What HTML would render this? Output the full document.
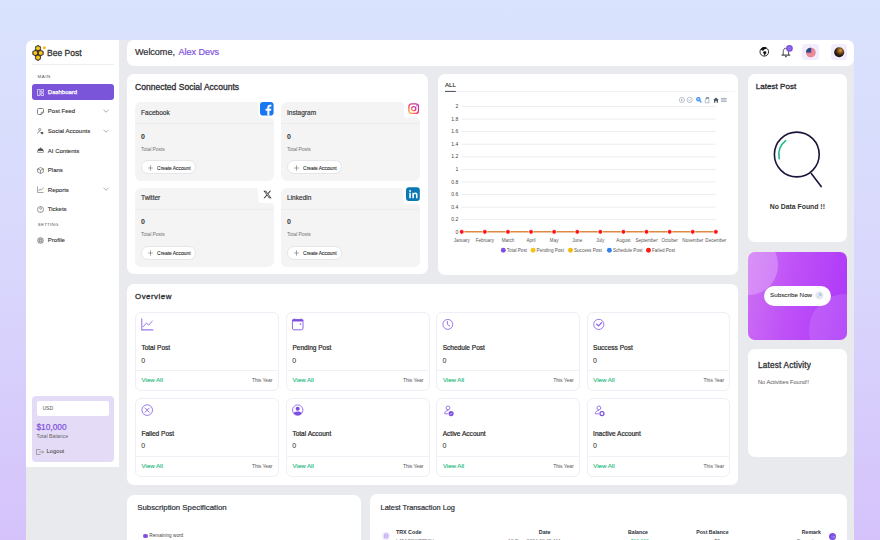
<!DOCTYPE html>
<html><head><meta charset="utf-8">
<style>
*{box-sizing:border-box;margin:0;padding:0}
html,body{width:880px;height:540px;overflow:hidden}
body{font-family:"Liberation Sans",sans-serif;color:#222;background:linear-gradient(180deg,#d9e3fd 0%,#d9d7fc 50%,#d5c2fb 100%);position:relative}
.a{position:absolute}
.w{background:#fff}
#app{left:26px;top:40px;width:828px;height:520px;background:#e9eaee;border-radius:7px 7px 0 0}
#side{left:26px;top:40px;width:93px;height:427px;background:#fff;border-radius:7px 0 0 0}
.t{position:absolute;white-space:nowrap;line-height:1}
</style></head>
<body>
<div id="app" class="a"></div>
<div id="side" class="a"></div>

<!-- SIDEBAR -->
<svg class="a" style="left:30px;top:43px" width="18" height="19" viewBox="30 43 18 19"><polygon points="38.00,45.25 40.64,46.77 40.64,49.82 38.00,51.35 35.36,49.82 35.36,46.77" fill="#2a241c" stroke="#2a241c" stroke-width="0.5"/><polygon points="35.30,49.90 37.94,51.43 37.94,54.48 35.30,56.00 32.66,54.48 32.66,51.43" fill="#2a241c" stroke="#2a241c" stroke-width="0.5"/><polygon points="40.70,49.90 43.34,51.43 43.34,54.48 40.70,56.00 38.06,54.48 38.06,51.43" fill="#2a241c" stroke="#2a241c" stroke-width="0.5"/><polygon points="38.00,54.55 40.64,56.08 40.64,59.12 38.00,60.65 35.36,59.12 35.36,56.08" fill="#2a241c" stroke="#2a241c" stroke-width="0.5"/><circle cx="38" cy="48.3" r="2.05" fill="#f8c51f"/><circle cx="35.3" cy="52.95" r="2.05" fill="#f8c51f"/><circle cx="40.7" cy="52.95" r="2.05" fill="#f8c51f"/><circle cx="38" cy="57.6" r="2.05" fill="#f8c51f"/><circle cx="44.3" cy="47.7" r="1.55" fill="#f9b71c"/></svg>
<div class="t" style="left:47px;top:48.8px;font-size:8.5px;color:#333;-webkit-text-stroke:0.3px #333">Bee Post</div>
<div class="a" style="left:32px;top:64px;width:82px;height:1px;background:#eceef2"></div>
<div class="t" style="left:37.5px;top:75.1px;font-size:4.4px;letter-spacing:0.55px;color:#555">MAIN</div>
<div class="a" style="left:32px;top:84px;width:82px;height:16px;background:#7b55d9;border-radius:3px"></div>
<svg class="a" style="left:37px;top:88.5px" width="7" height="7" viewBox="0 0 7 7" fill="none" stroke="#fff" stroke-width="0.7">
 <rect x="0.4" y="0.4" width="2.6" height="6.2" rx="0.4"/><rect x="4" y="0.4" width="2.6" height="2.6" rx="0.4"/><rect x="4" y="4" width="2.6" height="2.6" rx="0.4"/>
</svg>
<div class="t" style="left:47.8px;top:89px;font-size:6.0px;color:#fff;-webkit-text-stroke:0.25px #fff">Dashboard</div>
<svg class="a" style="left:37px;top:107.6px" width="7" height="7" viewBox="0 0 7 7" fill="none" stroke="#5e5e5e" stroke-width="0.75"><path d="M1.6,0.5h3.8a1.1,1.1 0 0 1 1.1,1.1v2.6l-2.3,2.3h-2.6a1.1,1.1 0 0 1 -1.1,-1.1v-3.8a1.1,1.1 0 0 1 1.1,-1.1z M6.5,4.2h-1.6a0.7,0.7 0 0 0 -0.7,0.7v1.6"/></svg>
<div class="t" style="left:47.8px;top:108.3px;font-size:6.0px;color:#333;-webkit-text-stroke:0.12px #333">Post Feed</div>
<svg class="a" style="left:102.5px;top:109.1px" width="6" height="4" viewBox="0 0 6 4" fill="none" stroke="#777" stroke-width="0.6"><path d="M0.5,0.8l2.5,2.4l2.5-2.4"/></svg>
<svg class="a" style="left:37px;top:127.6px" width="7" height="7" viewBox="0 0 7 7" fill="none" stroke="#5e5e5e" stroke-width="0.7"><circle cx="2.7" cy="1.6" r="1.1"/><path d="M0.6,5.6c0.2-1.3,1-2.1,2.1-2.1"/><circle cx="5.1" cy="5.1" r="1.25" fill="#5e5e5e" stroke="none"/><path d="M3.2,4.3l0.9,0.8"/></svg>
<div class="t" style="left:47.8px;top:128.3px;font-size:6.0px;color:#333;-webkit-text-stroke:0.12px #333">Social Accounts</div>
<svg class="a" style="left:102.5px;top:129.1px" width="6" height="4" viewBox="0 0 6 4" fill="none" stroke="#777" stroke-width="0.6"><path d="M0.5,0.8l2.5,2.4l2.5-2.4"/></svg>
<svg class="a" style="left:37px;top:147.3px" width="7" height="7" viewBox="0 0 7 7"><path d="M0.4,5.6v-1.2a3.1,3.1 0 0 1 6.2,0v1.2z" fill="#4e4e4e"/><rect x="0.9" y="3.9" width="5.2" height="1" fill="#fff"/><circle cx="3.5" cy="1.1" r="0.55" fill="#4e4e4e"/><path d="M3.5,1.3v0.9" stroke="#4e4e4e" stroke-width="0.5"/></svg>
<div class="t" style="left:47.8px;top:148.0px;font-size:6.0px;color:#333;-webkit-text-stroke:0.12px #333">AI Contents</div>
<svg class="a" style="left:37px;top:166.5px" width="7" height="7" viewBox="0 0 7 7" fill="none" stroke="#5e5e5e" stroke-width="0.65"><path d="M3.5,0.5l2.9,1.4v3.2l-2.9,1.4l-2.9,-1.4v-3.2z M0.6,1.9l2.9,1.4l2.9,-1.4 M3.5,3.3v3.2"/></svg>
<div class="t" style="left:47.8px;top:167.2px;font-size:6.0px;color:#333;-webkit-text-stroke:0.12px #333">Plans</div>
<svg class="a" style="left:37px;top:185.9px" width="7" height="7" viewBox="0 0 7 7" fill="none" stroke="#6a6a6a" stroke-width="0.6"><path d="M0.5,0.5v6h6 M1.5,5l1.5-2l1.3,1.2l2.2-2.7"/></svg>
<div class="t" style="left:47.8px;top:186.6px;font-size:6.0px;color:#333;-webkit-text-stroke:0.12px #333">Reports</div>
<svg class="a" style="left:102.5px;top:187.4px" width="6" height="4" viewBox="0 0 6 4" fill="none" stroke="#777" stroke-width="0.6"><path d="M0.5,0.8l2.5,2.4l2.5-2.4"/></svg>
<svg class="a" style="left:37px;top:205.6px" width="7" height="7" viewBox="0 0 7 7" fill="none" stroke="#5e5e5e" stroke-width="0.65"><circle cx="3.5" cy="3.5" r="3"/><path d="M2.6,2.7c0-0.6,0.4-0.95,0.9-0.95s0.9,0.35,0.9,0.85c0,0.7-0.9,0.8-0.9,1.5"/><circle cx="3.5" cy="5.25" r="0.35" fill="#7a7a7a" stroke="none"/></svg>
<div class="t" style="left:47.8px;top:206.3px;font-size:6.0px;color:#333;-webkit-text-stroke:0.12px #333">Tickets</div>
<svg class="a" style="left:37px;top:236.5px" width="7" height="7" viewBox="0 0 7 7" fill="none" stroke="#6a6a6a" stroke-width="0.6"><circle cx="3.5" cy="3.5" r="2.9" fill="#d4d4d4"/><circle cx="3.5" cy="3.5" r="1.2"/><path d="M1.6,1.6l1,1 M5.4,1.6l-1,1 M1.6,5.4l1-1 M5.4,5.4l-1-1"/></svg>
<div class="t" style="left:47.8px;top:237.2px;font-size:6.0px;color:#333;-webkit-text-stroke:0.12px #333">Profile</div>
<div class="t" style="left:37.8px;top:223.2px;font-size:4.3px;letter-spacing:0.3px;color:#555">SETTING</div>
<div class="a" style="left:32px;top:396px;width:82px;height:66px;background:#e4dcf6;border-radius:4px"></div>
<div class="a" style="left:37px;top:401px;width:72px;height:15px;background:#fff;border-radius:2px"></div>
<div class="t" style="left:42.4px;top:405.6px;font-size:5.1px;color:#555">USD</div>
<div class="t" style="left:36.5px;top:422.6px;font-size:8.3px;color:#7d4fe0;-webkit-text-stroke:0.2px #7d4fe0">$10,000</div>
<div class="t" style="left:36.5px;top:434.2px;font-size:5.28px;color:#666">Total Balance</div>
<svg class="a" style="left:36px;top:448.5px" width="8" height="6" viewBox="0 0 8 6" fill="none" stroke="#777" stroke-width="0.6"><path d="M4.5,0.5h-4v5h4 M3,3h4.5 M6,1.5l1.5,1.5l-1.5,1.5"/></svg>
<div class="t" style="left:46.5px;top:448.8px;font-size:5.8px;color:#333">Logout</div>
<!-- header -->
<div class="a w" style="left:127px;top:40px;width:727px;height:26.4px;border-radius:7px"></div>
<div class="t" style="left:135px;top:48.2px;font-size:9.1px;letter-spacing:-0.05px;color:#2e2e33;-webkit-text-stroke:0.2px #2e2e33">Welcome, <span style="margin-left:1.2px;color:#8052dc;-webkit-text-stroke:0.2px #8052dc">Alex Devs</span></div>

<svg class="a" style="left:758px;top:44px" width="38" height="15" viewBox="758 44 38 15">
<circle cx="764.3" cy="51.8" r="4.3" fill="none" stroke="#111" stroke-width="0.9"/>
<path d="M760.6,49.6c0.8-1.6,2.2-2.4,3.6-2.5c0.9,0,1.9,0.3,2.4,0.7l-0.5,1.1c-0.6,0.2-1.4,0-2,0.5c-0.5,0.5-0.2,1.1-0.9,1.3c-0.8,0.2-1.3-0.3-1.6-0.6z" fill="#111"/>
<path d="M763.2,51.8c0.6-0.6,1.8-0.7,2.6-0.4c0.6,0.3,0.7,0.9,0.5,1.5c-0.3,0.7-0.9,0.8-1,1.5c-0.1,0.6-0.4,1.2-0.9,1.2c-0.3-0.8-0.3-1.5-0.7-2c-0.4-0.5-0.8-1.2-0.5-1.8z" fill="#111"/>
<path d="M783.2,54.9v-3.3c0-1.9,1.1-3.4,2.7-3.4s2.7,1.5,2.7,3.4v3.3" fill="none" stroke="#222" stroke-width="0.8"/>
<path d="M781.9,55.1h8" stroke="#222" stroke-width="1" stroke-linecap="round"/>
<circle cx="785.9" cy="56.6" r="0.8" fill="#222"/>
<circle cx="789.5" cy="48.4" r="3.3" fill="#7b4fe2"/>
<circle cx="789.5" cy="48.4" r="1.3" fill="none" stroke="#b9a3f2" stroke-width="0.6"/>
</svg>
<div class="a" style="left:802.3px;top:44.3px;width:17px;height:16px;border-radius:3.5px;background:#f1edfc"></div>
<div class="a" style="left:831.2px;top:44.3px;width:16px;height:16px;border-radius:3.5px;background:#f1edfc"></div>
<svg class="a" style="left:805px;top:47px" width="12" height="12" viewBox="805 47 12 12">
<defs><clipPath id="fc"><circle cx="810.8" cy="52.5" r="4.8"/></clipPath></defs>
<g clip-path="url(#fc)"><rect x="805" y="47" width="12" height="12" fill="#e6798a"/>
<path d="M805,48.7h12M805,50.1h12M805,51.5h12M805,52.9h12M805,54.3h12M805,55.7h12M805,57.1h12" stroke="#f2a3ae" stroke-width="0.55"/>
<rect x="805" y="47" width="6.2" height="5.6" fill="#2b4a8c"/></g>
</svg>
<svg class="a" style="left:833px;top:46px" width="12" height="12" viewBox="833 46 12 12">
<defs><radialGradient id="av" cx="0.62" cy="0.32" r="0.75"><stop offset="0" stop-color="#e2a23e"/><stop offset="0.3" stop-color="#8a5a20"/><stop offset="0.65" stop-color="#2a1c10"/><stop offset="1" stop-color="#120d08"/></radialGradient></defs>
<circle cx="839.2" cy="52.3" r="5" fill="url(#av)"/>
</svg>
<!-- connected social card -->
<div class="a w" style="left:127px;top:74px;width:301px;height:200px;border-radius:7px"></div>
<div class="t" style="left:135px;top:82.9px;font-size:8.55px;color:#2e2e33;-webkit-text-stroke:0.3px #2e2e33">Connected Social Accounts</div>


<!-- SOCIAL CARDS -->
<svg class="a" style="left:135px;top:102.2px" width="139" height="79" viewBox="0 0 139 79"><path d="M6,0 H120.0 A3.5,3.5 0 0 1 123.5,3.5 V12 A4,4 0 0 0 127.5,16 H135.5 A3.5,3.5 0 0 1 139,19.5 V73 A6,6 0 0 1 133,79 H6 A6,6 0 0 1 0,73 V6 A6,6 0 0 1 6,0 Z" fill="#f4f4f5"/><path d="M0,21.4H139" stroke="#e8eaf1" stroke-width="0.8"/></svg>
<div class="t" style="left:141px;top:109.8px;font-size:6.55px;color:#333;-webkit-text-stroke:0.15px #333">Facebook</div>
<div class="t" style="left:141px;top:132.5px;font-size:7px;font-weight:bold;color:#333">0</div>
<div class="t" style="left:141px;top:146.6px;font-size:5.1px;letter-spacing:-0.1px;color:#777">Total Posts</div>
<div class="a" style="left:141.1px;top:160.1px;width:55.3px;height:14px;background:#fff;border:0.6px solid #e6e6e8;border-radius:7px"></div>
<svg class="a" style="left:147.8px;top:164.5px" width="5" height="6" viewBox="0 0 5 6" stroke="#555" stroke-width="0.5"><path d="M2.5,0.3V5.7M0.1,3H4.9"/></svg>
<div class="t" style="left:157.1px;top:166.9px;font-size:4.9px;color:#2a2a2a;-webkit-text-stroke:0.1px #2a2a2a">Create Account</div>
<svg class="a" style="left:281px;top:102.2px" width="139" height="79" viewBox="0 0 139 79"><path d="M6,0 H119.5 A3.5,3.5 0 0 1 123,3.5 V12 A4,4 0 0 0 127,16 H135.5 A3.5,3.5 0 0 1 139,19.5 V73 A6,6 0 0 1 133,79 H6 A6,6 0 0 1 0,73 V6 A6,6 0 0 1 6,0 Z" fill="#f4f4f5"/><path d="M0,21.4H139" stroke="#e8eaf1" stroke-width="0.8"/></svg>
<div class="t" style="left:287px;top:109.8px;font-size:6.55px;color:#333;-webkit-text-stroke:0.15px #333">Instagram</div>
<div class="t" style="left:287px;top:132.5px;font-size:7px;font-weight:bold;color:#333">0</div>
<div class="t" style="left:287px;top:146.6px;font-size:5.1px;letter-spacing:-0.1px;color:#777">Total Posts</div>
<div class="a" style="left:287.1px;top:160.1px;width:55.3px;height:14px;background:#fff;border:0.6px solid #e6e6e8;border-radius:7px"></div>
<svg class="a" style="left:293.8px;top:164.5px" width="5" height="6" viewBox="0 0 5 6" stroke="#555" stroke-width="0.5"><path d="M2.5,0.3V5.7M0.1,3H4.9"/></svg>
<div class="t" style="left:303.1px;top:166.9px;font-size:4.9px;color:#2a2a2a;-webkit-text-stroke:0.1px #2a2a2a">Create Account</div>
<svg class="a" style="left:135px;top:187.6px" width="139" height="79" viewBox="0 0 139 79"><path d="M6,0 H119.8 A3.5,3.5 0 0 1 123.3,3.5 V11 A4,4 0 0 0 127.3,15 H135.5 A3.5,3.5 0 0 1 139,18.5 V73 A6,6 0 0 1 133,79 H6 A6,6 0 0 1 0,73 V6 A6,6 0 0 1 6,0 Z" fill="#f4f4f5"/><path d="M0,21.4H139" stroke="#e8eaf1" stroke-width="0.8"/></svg>
<div class="t" style="left:141px;top:195.2px;font-size:6.55px;color:#333;-webkit-text-stroke:0.15px #333">Twitter</div>
<div class="t" style="left:141px;top:217.9px;font-size:7px;font-weight:bold;color:#333">0</div>
<div class="t" style="left:141px;top:232.0px;font-size:5.1px;letter-spacing:-0.1px;color:#777">Total Posts</div>
<div class="a" style="left:141.1px;top:245.5px;width:55.3px;height:14px;background:#fff;border:0.6px solid #e6e6e8;border-radius:7px"></div>
<svg class="a" style="left:147.8px;top:249.9px" width="5" height="6" viewBox="0 0 5 6" stroke="#555" stroke-width="0.5"><path d="M2.5,0.3V5.7M0.1,3H4.9"/></svg>
<div class="t" style="left:157.1px;top:252.3px;font-size:4.9px;color:#2a2a2a;-webkit-text-stroke:0.1px #2a2a2a">Create Account</div>
<svg class="a" style="left:281px;top:187.6px" width="139" height="79" viewBox="0 0 139 79"><path d="M6,0 H118.8 A3.5,3.5 0 0 1 122.3,3.5 V12 A4,4 0 0 0 126.3,16 H135.5 A3.5,3.5 0 0 1 139,19.5 V73 A6,6 0 0 1 133,79 H6 A6,6 0 0 1 0,73 V6 A6,6 0 0 1 6,0 Z" fill="#f4f4f5"/><path d="M0,21.4H139" stroke="#e8eaf1" stroke-width="0.8"/></svg>
<div class="t" style="left:287px;top:195.2px;font-size:6.55px;color:#333;-webkit-text-stroke:0.15px #333">Linkedin</div>
<div class="t" style="left:287px;top:217.9px;font-size:7px;font-weight:bold;color:#333">0</div>
<div class="t" style="left:287px;top:232.0px;font-size:5.1px;letter-spacing:-0.1px;color:#777">Total Posts</div>
<div class="a" style="left:287.1px;top:245.5px;width:55.3px;height:14px;background:#fff;border:0.6px solid #e6e6e8;border-radius:7px"></div>
<svg class="a" style="left:293.8px;top:249.9px" width="5" height="6" viewBox="0 0 5 6" stroke="#555" stroke-width="0.5"><path d="M2.5,0.3V5.7M0.1,3H4.9"/></svg>
<div class="t" style="left:303.1px;top:252.3px;font-size:4.9px;color:#2a2a2a;-webkit-text-stroke:0.1px #2a2a2a">Create Account</div>
<svg class="a" style="left:260.4px;top:102.2px" width="13.6" height="13.6" viewBox="0 0 14 14"><rect width="14" height="14" rx="3.2" fill="#1877f2"/><path d="M9.7,14V8.9h1.7l0.3-2H9.7V5.7c0-0.6,0.3-1.1,1.1-1.1h1V2.9c-0.4-0.1-1-0.1-1.6-0.1c-1.7,0-2.7,1-2.7,2.8v1.3H5.7v2h1.8V14z" fill="#fff"/></svg>
<svg class="a" style="left:407.6px;top:102.9px" width="11.4" height="11.4" viewBox="0 0 12 12"><defs><linearGradient id="ig" x1="0" y1="1" x2="1" y2="0"><stop offset="0" stop-color="#fdc94a"/><stop offset="0.45" stop-color="#f4346d"/><stop offset="1" stop-color="#b739c6"/></linearGradient></defs><rect x="0.9" y="0.9" width="10.2" height="10.2" rx="3" fill="none" stroke="url(#ig)" stroke-width="1.5"/><circle cx="6" cy="6" r="2.2" fill="none" stroke="url(#ig)" stroke-width="1.4"/><circle cx="9" cy="3" r="0.6" fill="#d0369b"/></svg>
<svg class="a" style="left:262.8px;top:189.8px" width="9" height="9" viewBox="0 0 24 24"><path d="M18.2,2.2h3.4l-7.4,8.5L23,21.8h-6.8l-5.3-7-6.1,7H1.4l7.9-9L1,2.2h7l4.8,6.4zM17,19.8h1.9L7,4.2H5z" fill="#333"/></svg>
<svg class="a" style="left:406.1px;top:187.2px" width="13.8" height="14.2" viewBox="0 0 14 14"><rect width="14" height="14" rx="3" fill="#0a78b5"/><rect x="3.3" y="5.6" width="1.6" height="5.6" fill="#fff"/><circle cx="4.1" cy="3.9" r="0.95" fill="#fff"/><path d="M6.4,5.6h1.5v0.8c0.3-0.5,0.9-0.9,1.8-0.9c1.5,0,2,0.9,2,2.4v3.3h-1.6V8.2c0-0.7-0.2-1.3-1-1.3c-0.8,0-1.1,0.6-1.1,1.4v2.9H6.4z" fill="#fff"/></svg>
<!-- chart card -->
<div class="a w" style="left:438px;top:74.2px;width:300.3px;height:200.6px;border-radius:7px"></div>


<!-- CHART -->
<svg class="a" style="left:438px;top:74px" width="300" height="201" viewBox="438 74 300 201" font-family="Liberation Sans, sans-serif">
<text x="445" y="87" font-size="6.1" fill="#333" stroke="#333" stroke-width="0.15">ALL</text>
<rect x="456" y="91" width="279" height="0.8" fill="#eef0f5"/><rect x="445" y="90.9" width="10.8" height="1.1" fill="#555b6b"/>
<rect x="461.5" y="106.00" width="254.3" height="0.9" fill="#ebebee"/>
<text x="458.2" y="108.00" font-size="5.0" fill="#444" text-anchor="end">2</text>
<rect x="461.5" y="118.58" width="254.3" height="0.9" fill="#ebebee"/>
<text x="458.2" y="120.58" font-size="5.0" fill="#444" text-anchor="end">1.8</text>
<rect x="461.5" y="131.17" width="254.3" height="0.9" fill="#ebebee"/>
<text x="458.2" y="133.17" font-size="5.0" fill="#444" text-anchor="end">1.6</text>
<rect x="461.5" y="143.76" width="254.3" height="0.9" fill="#ebebee"/>
<text x="458.2" y="145.75" font-size="5.0" fill="#444" text-anchor="end">1.4</text>
<rect x="461.5" y="156.34" width="254.3" height="0.9" fill="#ebebee"/>
<text x="458.2" y="158.34" font-size="5.0" fill="#444" text-anchor="end">1.2</text>
<rect x="461.5" y="168.93" width="254.3" height="0.9" fill="#ebebee"/>
<text x="458.2" y="170.93" font-size="5.0" fill="#444" text-anchor="end">1</text>
<rect x="461.5" y="181.51" width="254.3" height="0.9" fill="#ebebee"/>
<text x="458.2" y="183.51" font-size="5.0" fill="#444" text-anchor="end">0.8</text>
<rect x="461.5" y="194.10" width="254.3" height="0.9" fill="#ebebee"/>
<text x="458.2" y="196.09" font-size="5.0" fill="#444" text-anchor="end">0.6</text>
<rect x="461.5" y="206.68" width="254.3" height="0.9" fill="#ebebee"/>
<text x="458.2" y="208.68" font-size="5.0" fill="#444" text-anchor="end">0.4</text>
<rect x="461.5" y="219.26" width="254.3" height="0.9" fill="#ebebee"/>
<text x="458.2" y="221.26" font-size="5.0" fill="#444" text-anchor="end">0.2</text>
<text x="458.2" y="233.85" font-size="5.0" fill="#444" text-anchor="end">0</text>
<path d="M461.7,231.85H715.8" stroke="#de8a3e" stroke-width="1.5"/>
<circle cx="461.75" cy="231.85" r="2.35" fill="#ff0f0f" stroke="#fff" stroke-width="0.8"/>
<text x="461.75" y="241.5" font-size="4.55" fill="#555" text-anchor="middle">January</text>
<circle cx="484.85" cy="231.85" r="2.35" fill="#ff0f0f" stroke="#fff" stroke-width="0.8"/>
<text x="484.85" y="241.5" font-size="4.55" fill="#555" text-anchor="middle">February</text>
<circle cx="507.95" cy="231.85" r="2.35" fill="#ff0f0f" stroke="#fff" stroke-width="0.8"/>
<text x="507.95" y="241.5" font-size="4.55" fill="#555" text-anchor="middle">March</text>
<circle cx="531.05" cy="231.85" r="2.35" fill="#ff0f0f" stroke="#fff" stroke-width="0.8"/>
<text x="531.05" y="241.5" font-size="4.55" fill="#555" text-anchor="middle">April</text>
<circle cx="554.15" cy="231.85" r="2.35" fill="#ff0f0f" stroke="#fff" stroke-width="0.8"/>
<text x="554.15" y="241.5" font-size="4.55" fill="#555" text-anchor="middle">May</text>
<circle cx="577.25" cy="231.85" r="2.35" fill="#ff0f0f" stroke="#fff" stroke-width="0.8"/>
<text x="577.25" y="241.5" font-size="4.55" fill="#555" text-anchor="middle">June</text>
<circle cx="600.35" cy="231.85" r="2.35" fill="#ff0f0f" stroke="#fff" stroke-width="0.8"/>
<text x="600.35" y="241.5" font-size="4.55" fill="#555" text-anchor="middle">July</text>
<circle cx="623.45" cy="231.85" r="2.35" fill="#ff0f0f" stroke="#fff" stroke-width="0.8"/>
<text x="623.45" y="241.5" font-size="4.55" fill="#555" text-anchor="middle">August</text>
<circle cx="646.55" cy="231.85" r="2.35" fill="#ff0f0f" stroke="#fff" stroke-width="0.8"/>
<text x="646.55" y="241.5" font-size="4.55" fill="#555" text-anchor="middle">September</text>
<circle cx="669.65" cy="231.85" r="2.35" fill="#ff0f0f" stroke="#fff" stroke-width="0.8"/>
<text x="669.65" y="241.5" font-size="4.55" fill="#555" text-anchor="middle">October</text>
<circle cx="692.75" cy="231.85" r="2.35" fill="#ff0f0f" stroke="#fff" stroke-width="0.8"/>
<text x="692.75" y="241.5" font-size="4.55" fill="#555" text-anchor="middle">November</text>
<circle cx="715.85" cy="231.85" r="2.35" fill="#ff0f0f" stroke="#fff" stroke-width="0.8"/>
<text x="715.85" y="241.5" font-size="4.55" fill="#555" text-anchor="middle">December</text>
<circle cx="503.3" cy="250.2" r="2.45" fill="#7d4fe0"/><text x="506.8" y="251.8" font-size="4.6" fill="#555">Total Post</text>
<circle cx="533.1" cy="250.2" r="2.45" fill="#f5c518"/><text x="536.6" y="251.8" font-size="4.6" fill="#555">Pending Post</text>
<circle cx="570.5" cy="250.2" r="2.45" fill="#f2b90f"/><text x="574.0" y="251.8" font-size="4.6" fill="#555">Success Post</text>
<circle cx="609.4" cy="250.2" r="2.45" fill="#2f80ed"/><text x="612.9" y="251.8" font-size="4.6" fill="#555">Schedule Post</text>
<circle cx="648.5" cy="250.2" r="2.45" fill="#ff1a1a"/><text x="652.0" y="251.8" font-size="4.6" fill="#555">Failed Post</text>
<g fill="none" stroke="#8a93a3" stroke-width="0.55">
<circle cx="681.9" cy="99.9" r="2.6"/><path d="M681.3,98.6l1.6,1.3l-1.6,1.3z" fill="#8a93a3" stroke="none"/>
<circle cx="689.6" cy="99.9" r="2.6"/><path d="M688.5,99.4l1.1,1.3l1.1-1.3" />
</g>
<circle cx="698.4" cy="99.3" r="1.75" fill="#9cc4f7" stroke="#3d8ef0" stroke-width="1.1"/><path d="M699.7,100.7l1.7,1.8" stroke="#3d8ef0" stroke-width="1.1"/>
<path d="M705.3,102.8v-2.5c0-0.5,0.4-0.6,0.7-0.4v-1.7c0-0.9,2.9-0.9,2.9,0v4.6z" fill="#fff" stroke="#7f8a9c" stroke-width="0.55"/><rect x="705.9" y="97.2" width="2.9" height="1.6" fill="#7f8a9c"/>
<path d="M713.2,100.1l2.8-2.7l2.8,2.7h-0.8v2.7h-1.3v-1.7h-1.4v1.7h-1.3v-2.7z" fill="#4f5b6e"/>
<path d="M720.9,98.4h5.8M720.9,99.9h5.8M720.9,101.4h5.8" stroke="#9aa4b4" stroke-width="0.9"/>
</svg>
<!-- latest post -->
<div class="a w" style="left:748px;top:74px;width:99px;height:168px;border-radius:7px"></div>
<div class="t" style="left:755.8px;top:83.3px;font-size:8.1px;color:#2e2e33;-webkit-text-stroke:0.3px #2e2e33">Latest Post</div>

<svg class="a" style="left:768px;top:126px" width="60" height="66" viewBox="768 126 60 66">
<circle cx="796.8" cy="154.5" r="22.4" fill="none" stroke="#19163a" stroke-width="1.6"/>
<path d="M811.3,173.6L821.2,186.6" stroke="#19163a" stroke-width="1.6" stroke-linecap="round"/>
<path d="M785.6,140.6A18.6,18.6 0 0 0 779.2,158.6" fill="none" stroke="#22b98a" stroke-width="1.6" stroke-linecap="round"/>
</svg>
<div class="t" style="left:769.7px;top:203.5px;font-size:6.87px;font-weight:bold;color:#333">No Data Found !!</div>
<!-- subscribe -->
<div class="a" style="left:748px;top:251.5px;width:99.4px;height:88.3px;border-radius:7px;overflow:hidden;background:linear-gradient(100deg,#cd70f4 0%,#be50f7 45%,#ad37f9 100%)">
 <div class="a" style="left:-29.6px;top:-16.1px;width:59.2px;height:59.2px;border-radius:50%;background:rgba(255,255,255,0.24)"></div>
 <div class="a" style="left:61px;top:42.5px;width:72px;height:72px;border-radius:50%;background:rgba(255,255,255,0.12)"></div>
</div>
<div class="a" style="left:763.5px;top:285.5px;width:67.7px;height:20.2px;border-radius:10.1px;background:#fff"></div>
<div class="t" style="left:770.1px;top:292.3px;font-size:6.26px;color:#2a2a2a;-webkit-text-stroke:0.08px #2a2a2a">Subscribe Now</div>
<svg class="a" style="left:815.3px;top:291.1px" width="8.8" height="8.8" viewBox="0 0 9 9"><circle cx="4.5" cy="4.5" r="4.3" fill="#e8e9ef"/><path d="M2.9,6.1L6.1,2.9M3.7,2.9H6.1V5.3" stroke="#6aaaf0" stroke-width="0.6" fill="none"/></svg>

<!-- latest activity -->
<div class="a w" style="left:748px;top:349px;width:99px;height:108px;border-radius:7px"></div>

<div class="t" style="left:758px;top:362.2px;font-size:8.2px;letter-spacing:0.2px;color:#2e2e33;-webkit-text-stroke:0.3px #2e2e33">Latest Activity</div>
<div class="t" style="left:758px;top:379.6px;font-size:5.6px;color:#555">No Activities Found!!</div>
<!-- overview -->
<div class="a w" style="left:127px;top:284px;width:611px;height:201px;border-radius:7px"></div>
<div class="t" style="left:135px;top:292.8px;font-size:7.9px;letter-spacing:0.5px;color:#2e2e33;-webkit-text-stroke:0.3px #2e2e33">Overview</div>


<!-- OVERVIEW CARDS -->
<div class="a" style="left:135px;top:312.2px;width:143.6px;height:78.8px;border:0.8px solid #efeef6;border-radius:6px"></div>
<div class="a" style="left:135px;top:370.1px;width:143.6px;height:0.8px;background:#f1f0f6"></div>
<svg class="a" style="left:135px;top:312.2px" width="24" height="24" viewBox="135 312.2 24 24"><path d="M141.8,319.1V330.1H152.9" fill="none" stroke="#9a78e8" stroke-width="1.1" stroke-linecap="round"/><path d="M143.1,327.0L146.4,323.3L148.7,325.3L152.4,321.2" fill="none" stroke="#9a78e8" stroke-width="1" stroke-linecap="round"/></svg>
<div class="t" style="left:141.4px;top:345.3px;font-size:6.55px;color:#262626;-webkit-text-stroke:0.2px #262626">Total Post</div>
<div class="t" style="left:141.3px;top:356.5px;font-size:7px;color:#333;-webkit-text-stroke:0.05px #333">0</div>
<div class="t" style="left:141.6px;top:377.1px;font-size:6.1px;color:#2ebd85;-webkit-text-stroke:0.15px #2ebd85">View All</div>
<div class="t" style="left:251.9px;top:378.1px;font-size:5.05px;letter-spacing:-0.06px;color:#555">This Year</div>
<div class="a" style="left:286px;top:312.2px;width:143.6px;height:78.8px;border:0.8px solid #efeef6;border-radius:6px"></div>
<div class="a" style="left:286px;top:370.1px;width:143.6px;height:0.8px;background:#f1f0f6"></div>
<svg class="a" style="left:286px;top:312.2px" width="24" height="24" viewBox="286 312.2 24 24"><rect x="292.4" y="320" width="10.6" height="10" rx="1.6" fill="none" stroke="#8e65e4" stroke-width="1"/><rect x="292" y="319.4" width="11.4" height="2.4" rx="1" fill="#7d4fe0"/><circle cx="300.5" cy="324.2" r="0.8" fill="#7d4fe0"/><path d="M294.6,319.4v-0.8M300.8,319.4v-0.8" stroke="#7d4fe0" stroke-width="0.9"/></svg>
<div class="t" style="left:292.4px;top:345.3px;font-size:6.55px;color:#262626;-webkit-text-stroke:0.2px #262626">Pending Post</div>
<div class="t" style="left:292.3px;top:356.5px;font-size:7px;color:#333;-webkit-text-stroke:0.05px #333">0</div>
<div class="t" style="left:292.6px;top:377.1px;font-size:6.1px;color:#2ebd85;-webkit-text-stroke:0.15px #2ebd85">View All</div>
<div class="t" style="left:402.9px;top:378.1px;font-size:5.05px;letter-spacing:-0.06px;color:#555">This Year</div>
<div class="a" style="left:436.3px;top:312.2px;width:143.6px;height:78.8px;border:0.8px solid #efeef6;border-radius:6px"></div>
<div class="a" style="left:436.3px;top:370.1px;width:143.6px;height:0.8px;background:#f1f0f6"></div>
<svg class="a" style="left:436.3px;top:312.2px" width="24" height="24" viewBox="436.3 312.2 24 24"><circle cx="448.1" cy="324.59999999999997" r="4.95" fill="none" stroke="#9a78e8" stroke-width="1"/><path d="M447.7,321.5V324.7L450.2,326.3" fill="none" stroke="#9a78e8" stroke-width="1" stroke-linecap="round"/></svg>
<div class="t" style="left:442.7px;top:345.3px;font-size:6.55px;color:#262626;-webkit-text-stroke:0.2px #262626">Schedule Post</div>
<div class="t" style="left:442.6px;top:356.5px;font-size:7px;color:#333;-webkit-text-stroke:0.05px #333">0</div>
<div class="t" style="left:442.9px;top:377.1px;font-size:6.1px;color:#2ebd85;-webkit-text-stroke:0.15px #2ebd85">View All</div>
<div class="t" style="left:553.2px;top:378.1px;font-size:5.05px;letter-spacing:-0.06px;color:#555">This Year</div>
<div class="a" style="left:586.7px;top:312.2px;width:143.6px;height:78.8px;border:0.8px solid #efeef6;border-radius:6px"></div>
<div class="a" style="left:586.7px;top:370.1px;width:143.6px;height:0.8px;background:#f1f0f6"></div>
<svg class="a" style="left:586.7px;top:312.2px" width="24" height="24" viewBox="586.7 312.2 24 24"><circle cx="598.5" cy="324.59999999999997" r="5.1" fill="none" stroke="#9a78e8" stroke-width="1"/><path d="M596.3000000000001,324.4L598.3000000000001,326.0L601.4000000000001,322.7" fill="none" stroke="#8a5fe6" stroke-width="1.1" stroke-linecap="round" stroke-linejoin="round"/></svg>
<div class="t" style="left:593.1px;top:345.3px;font-size:6.55px;color:#262626;-webkit-text-stroke:0.2px #262626">Success Post</div>
<div class="t" style="left:593.0px;top:356.5px;font-size:7px;color:#333;-webkit-text-stroke:0.05px #333">0</div>
<div class="t" style="left:593.3px;top:377.1px;font-size:6.1px;color:#2ebd85;-webkit-text-stroke:0.15px #2ebd85">View All</div>
<div class="t" style="left:703.6px;top:378.1px;font-size:5.05px;letter-spacing:-0.06px;color:#555">This Year</div>
<div class="a" style="left:135px;top:397.9px;width:143.6px;height:78.8px;border:0.8px solid #efeef6;border-radius:6px"></div>
<div class="a" style="left:135px;top:455.8px;width:143.6px;height:0.8px;background:#f1f0f6"></div>
<svg class="a" style="left:135px;top:397.9px" width="24" height="24" viewBox="135 397.9 24 24"><circle cx="147.2" cy="410.0" r="5.3" fill="none" stroke="#9a78e8" stroke-width="1"/><path d="M145.1,407.9L149.3,412.09999999999997M149.3,407.9L145.1,412.09999999999997" fill="none" stroke="#8e65e4" stroke-width="0.95" stroke-linecap="round"/></svg>
<div class="t" style="left:141.4px;top:431.4px;font-size:6.55px;color:#262626;-webkit-text-stroke:0.2px #262626">Failed Post</div>
<div class="t" style="left:141.3px;top:442.2px;font-size:7px;color:#333;-webkit-text-stroke:0.05px #333">0</div>
<div class="t" style="left:141.6px;top:462.8px;font-size:6.1px;color:#2ebd85;-webkit-text-stroke:0.15px #2ebd85">View All</div>
<div class="t" style="left:251.9px;top:464.0px;font-size:5.05px;letter-spacing:-0.06px;color:#555">This Year</div>
<div class="a" style="left:286px;top:397.9px;width:143.6px;height:78.8px;border:0.8px solid #efeef6;border-radius:6px"></div>
<div class="a" style="left:286px;top:455.8px;width:143.6px;height:0.8px;background:#f1f0f6"></div>
<svg class="a" style="left:286px;top:397.9px" width="24" height="24" viewBox="286 397.9 24 24"><defs><clipPath id="ta"><circle cx="297.7" cy="410.0" r="5.2"/></clipPath></defs><circle cx="297.7" cy="410.0" r="5.2" fill="none" stroke="#9a78e8" stroke-width="1"/><circle cx="297.7" cy="408.7" r="2.05" fill="#7d4fe0"/><g clip-path="url(#ta)"><ellipse cx="297.7" cy="414.9" rx="5.2" ry="3.6" fill="#7d4fe0"/></g></svg>
<div class="t" style="left:292.4px;top:431.4px;font-size:6.55px;color:#262626;-webkit-text-stroke:0.2px #262626">Total Account</div>
<div class="t" style="left:292.3px;top:442.2px;font-size:7px;color:#333;-webkit-text-stroke:0.05px #333">0</div>
<div class="t" style="left:292.6px;top:462.8px;font-size:6.1px;color:#2ebd85;-webkit-text-stroke:0.15px #2ebd85">View All</div>
<div class="t" style="left:402.9px;top:464.0px;font-size:5.05px;letter-spacing:-0.06px;color:#555">This Year</div>
<div class="a" style="left:436.3px;top:397.9px;width:143.6px;height:78.8px;border:0.8px solid #efeef6;border-radius:6px"></div>
<div class="a" style="left:436.3px;top:455.8px;width:143.6px;height:0.8px;background:#f1f0f6"></div>
<svg class="a" style="left:436.3px;top:397.9px" width="24" height="24" viewBox="436.3 397.9 24 24"><g transform="translate(0.7,0)"><circle cx="447.6" cy="407.79999999999995" r="1.9" fill="none" stroke="#9a78e8" stroke-width="1"/><path d="M447.2,413.7H444.2c0-2,1.6-3.3,3.3-3.3" fill="none" stroke="#9a78e8" stroke-width="1" stroke-linecap="round"/><circle cx="450.7" cy="413.5" r="2.55" fill="#7d4fe0"/><path d="M449.6,413.59999999999997l0.8,0.7l1.4-1.5" fill="none" stroke="#fff" stroke-width="0.6"/></g></svg>
<div class="t" style="left:442.7px;top:431.4px;font-size:6.55px;color:#262626;-webkit-text-stroke:0.2px #262626">Active Account</div>
<div class="t" style="left:442.6px;top:442.2px;font-size:7px;color:#333;-webkit-text-stroke:0.05px #333">0</div>
<div class="t" style="left:442.9px;top:462.8px;font-size:6.1px;color:#2ebd85;-webkit-text-stroke:0.15px #2ebd85">View All</div>
<div class="t" style="left:553.2px;top:464.0px;font-size:5.05px;letter-spacing:-0.06px;color:#555">This Year</div>
<div class="a" style="left:586.7px;top:397.9px;width:143.6px;height:78.8px;border:0.8px solid #efeef6;border-radius:6px"></div>
<div class="a" style="left:586.7px;top:455.8px;width:143.6px;height:0.8px;background:#f1f0f6"></div>
<svg class="a" style="left:586.7px;top:397.9px" width="24" height="24" viewBox="586.7 397.9 24 24"><circle cx="598.6" cy="407.79999999999995" r="1.9" fill="none" stroke="#9a78e8" stroke-width="1"/><path d="M598.2,413.7H595.0c0-2,1.6-3.3,3.3-3.3" fill="none" stroke="#9a78e8" stroke-width="1" stroke-linecap="round"/><circle cx="601.7" cy="413.5" r="2.05" fill="none" stroke="#7d4fe0" stroke-width="1.2"/></svg>
<div class="t" style="left:593.1px;top:431.4px;font-size:6.55px;color:#262626;-webkit-text-stroke:0.2px #262626">Inactive Account</div>
<div class="t" style="left:593.0px;top:442.2px;font-size:7px;color:#333;-webkit-text-stroke:0.05px #333">0</div>
<div class="t" style="left:593.3px;top:462.8px;font-size:6.1px;color:#2ebd85;-webkit-text-stroke:0.15px #2ebd85">View All</div>
<div class="t" style="left:703.6px;top:464.0px;font-size:5.05px;letter-spacing:-0.06px;color:#555">This Year</div>
<!-- bottom cards -->
<div class="a w" style="left:127px;top:494.6px;width:233.5px;height:60px;border-radius:7px"></div>
<div class="t" style="left:137.3px;top:503.6px;font-size:7.8px;color:#2b3038;-webkit-text-stroke:0.2px #2b3038">Subscription Specification</div>
<div class="a" style="left:143.3px;top:533.5px;width:4.4px;height:4.4px;border-radius:50%;background:#7d4fe0"></div>
<div class="t" style="left:149.3px;top:534.2px;font-size:4.7px;color:#444">Remaining word</div>
<div class="a w" style="left:370.3px;top:494.4px;width:476.7px;height:60px;border-radius:7px"></div>
<div class="t" style="left:380.6px;top:503.5px;font-size:7.35px;color:#2b3038;-webkit-text-stroke:0.2px #2b3038">Latest Transaction Log</div>
<svg class="a" style="left:381px;top:531px" width="10" height="10" viewBox="0 0 10 10"><circle cx="5.1" cy="4.9" r="3.9" fill="#ede5fb"/><rect x="3.6" y="3" width="3" height="3.8" rx="0.6" fill="none" stroke="#9e7de8" stroke-width="0.6"/><path d="M4.3,4.3h1.6M4.3,5.3h1.6" stroke="#9e7de8" stroke-width="0.4"/></svg>
<div class="t" style="left:395.9px;top:530px;font-size:5.36px;font-weight:bold;color:#2b3038">TRX Code</div>
<div class="t" style="left:538.8px;top:530px;font-size:5.4px;font-weight:bold;color:#2b3038">Date</div>
<div class="t" style="left:628px;top:530px;font-size:5.19px;font-weight:bold;color:#2b3038">Balance</div>
<div class="t" style="left:696.3px;top:530px;font-size:5.13px;font-weight:bold;color:#2b3038">Post Balance</div>
<div class="t" style="left:801.8px;top:530px;font-size:5.23px;font-weight:bold;color:#2b3038">Remark</div>
<div class="t" style="left:396px;top:539.2px;font-size:5px;color:#777">LJ9AS8WZ7B8U</div>
<div class="t" style="left:508px;top:539.2px;font-size:5px;color:#777">18 Dec, 2024 08:45 AM</div>
<div class="t" style="left:626.5px;top:539.2px;font-size:5px;color:#2ebd85">+ $10,000</div>
<div class="t" style="left:714.5px;top:539.2px;font-size:5px;color:#555">$0</div>
<div class="t" style="left:797px;top:539.2px;font-size:5px;color:#777">Deposit</div>
<div class="a" style="left:829.3px;top:533.2px;width:7px;height:7px;border-radius:50%;background:#7b4fe2"></div>
<svg class="a" style="left:830px;top:534px" width="6" height="6" viewBox="0 0 6 6"><path d="M1.2,3h3.6M3.6,1.8L4.8,3L3.6,4.2" fill="none" stroke="#c9b7f5" stroke-width="0.5"/></svg>
</body></html>
